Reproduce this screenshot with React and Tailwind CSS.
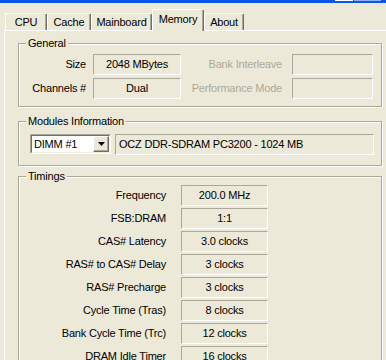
import React from "react";

const sunken =
  "border border-t-[#aca899] border-l-[#aca899] border-b-white border-r-white";

const tabs = [
  { label: "CPU", w: "w-[42px]" },
  { label: "Cache", w: "w-[44px]" },
  { label: "Mainboard", w: "w-[61px]" },
  { label: "Memory", w: "w-[52px]", active: true },
  { label: "About", w: "w-[40px]" },
];

const timings = [
  ["Frequency", "200.0 MHz"],
  ["FSB:DRAM", "1:1"],
  ["CAS# Latency", "3.0 clocks"],
  ["RAS# to CAS# Delay", "3 clocks"],
  ["RAS# Precharge", "3 clocks"],
  ["Cycle Time (Tras)", "8 clocks"],
  ["Bank Cycle Time (Trc)", "12 clocks"],
  ["DRAM Idle Timer", "16 clocks"],
];

function Group({ title, className = "", children }) {
  return (
    <div
      className={`relative w-[364px] border border-[#aca899] shadow-[inset_1px_1px_0_#fff,1px_1px_0_#fff] ${className}`}
    >
      <span className="absolute -top-[7px] left-[7px] bg-[#ece9d8] px-[2px] leading-[13px]">
        {title}
      </span>
      {children}
    </div>
  );
}

function Field({ className = "", children }) {
  return (
    <div
      className={`h-[21px] flex items-center justify-center leading-none ${sunken} ${className}`}
    >
      {children}
    </div>
  );
}

export default function App() {
  return (
    <div className="w-[386px] h-[360px] overflow-hidden bg-[#ece9d8] text-black text-[11px] tracking-[-0.2px] font-['Liberation_Sans',Arial,sans-serif] flex flex-col">
      {/* title bar edge */}
      <div className="h-[3px] bg-[#0a55ea] flex items-start shrink-0">
        <div className="flex-1" />
        <div className="w-[18px] h-[1px] bg-white" />
        <div className="w-[27px] h-[1px] ml-[1px] bg-[#8fb0f6]" />
        <div className="w-[5px]" />
      </div>

      {/* tabs */}
      <div className="h-[27px] flex items-end pl-[5px] shrink-0">
        {tabs.map((t) =>
          t.active ? (
            <div
              key={t.label}
              className={`relative z-10 ${t.w} h-[22px] -mb-[1px] bg-[#ece9d8] border-l border-t border-white border-r border-r-[#716f64] rounded-t-[2px] shadow-[inset_-1px_0_0_#aca899] flex items-start justify-center pt-[3px] leading-[13px]`}
            >
              {t.label}
            </div>
          ) : (
            <div
              key={t.label}
              className={`${t.w} h-[17px] border-l border-t border-white border-r border-r-[#716f64] rounded-t-[2px] shadow-[inset_-1px_0_0_#aca899] flex items-center justify-center leading-none`}
            >
              {t.label}
            </div>
          )
        )}
      </div>

      {/* panel */}
      <div className="ml-[4px] w-[420px] flex-1 border-l border-t border-white pl-[13px]">
        <Group title="General" className="mt-[12px]">
          <div className="flex flex-col gap-[3px] pt-[10px] pb-[7px]">
            <div className="flex items-center">
              <div className="w-[67px] text-right">Size</div>
              <Field className="ml-[7px] w-[88px]">2048 MBytes</Field>
              <div className="w-[101px] text-right text-[#aca899]">
                Bank Interleave
              </div>
              <Field className="ml-[10px] w-[81px]" />
            </div>
            <div className="flex items-center">
              <div className="w-[67px] text-right">Channels #</div>
              <Field className="ml-[7px] w-[88px]">Dual</Field>
              <div className="w-[101px] text-right text-[#aca899] whitespace-nowrap">
                Performance Mode
              </div>
              <Field className="ml-[10px] w-[81px]" />
            </div>
          </div>
        </Group>

        <Group title="Modules Information" className="mt-[14px]">
          <div className="flex items-start pt-[12px] pb-[10px]">
            <div className={`ml-[11px] w-[81px] h-[20px] ${sunken}`}>
              <div className="h-full flex border border-t-[#716f64] border-l-[#716f64] border-b-[#f1efe2] border-r-[#f1efe2]">
                <div className="flex-1 bg-white flex items-center pl-[2px] leading-none">
                  DIMM #1
                </div>
                <div className="w-[16px] bg-[#ece9d8] border border-t-white border-l-white border-b-[#716f64] border-r-[#716f64] shadow-[inset_-1px_-1px_0_#aca899] flex items-center justify-center">
                  <svg width="7" height="4" viewBox="0 0 7 4">
                    <polygon points="0,0 7,0 3.5,4" fill="#000" />
                  </svg>
                </div>
              </div>
            </div>
            <div
              className={`ml-[4px] w-[259px] h-[21px] flex items-center pl-[3px] leading-none ${sunken}`}
            >
              OCZ DDR-SDRAM PC3200 - 1024 MB
            </div>
          </div>
        </Group>

        <Group title="Timings" className="mt-[10px]">
          <div className="flex flex-col gap-[2px] pt-[8px] pb-[8px]">
            {timings.map(([label, value]) => (
              <div key={label} className="flex items-center">
                <div className="w-[147px] text-right">{label}</div>
                <Field className="ml-[15px] w-[87px]">{value}</Field>
              </div>
            ))}
          </div>
        </Group>
      </div>
    </div>
  );
}
